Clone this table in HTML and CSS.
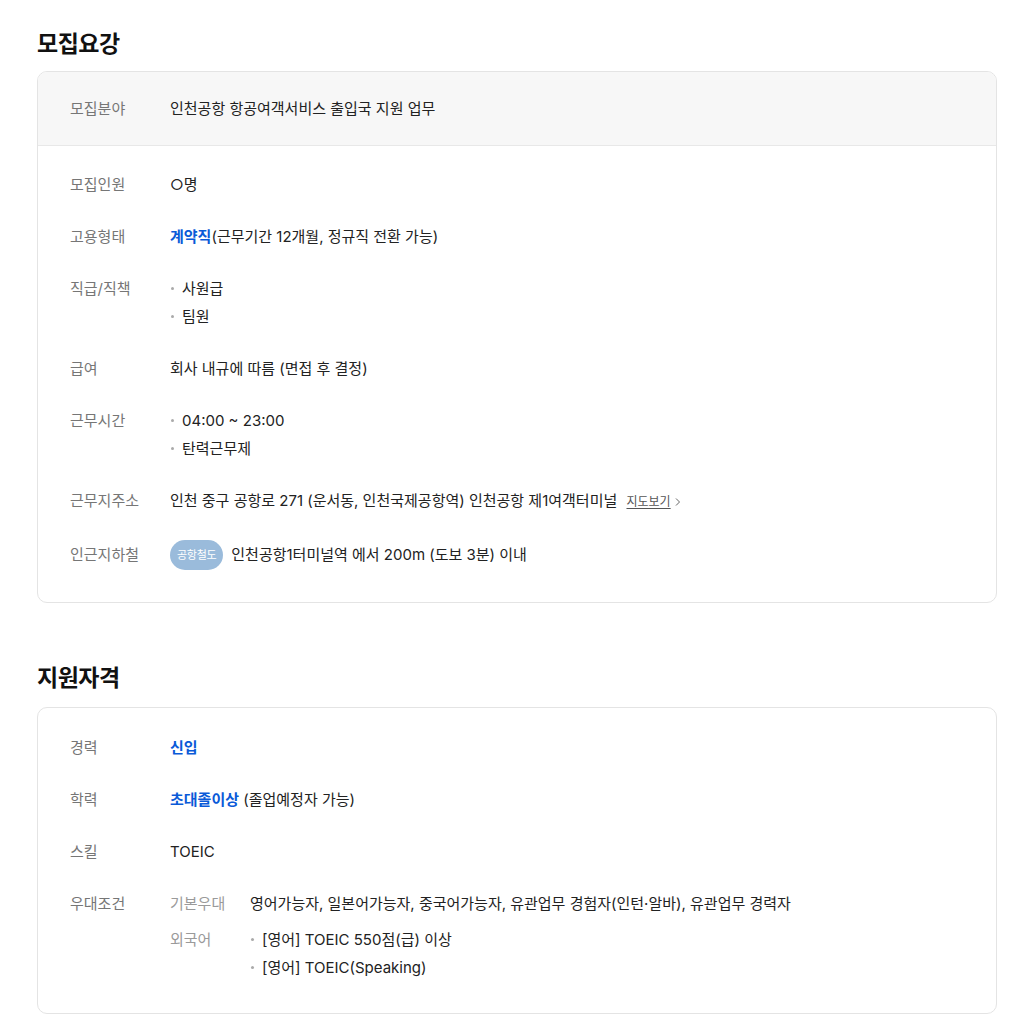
FILE: index.html
```html
<!DOCTYPE html>
<html lang="ko">
<head>
<meta charset="utf-8">
<title>모집요강</title>
<link rel="stylesheet" href="styles.css">
</head>
<body>
<div class="page">
  <section class="section">
    <h2 class="title">모집요강</h2>
    <div class="card">
      <div class="card-head">
        <div class="row">
          <div class="label">모집분야</div>
          <div class="value">인천공항 항공여객서비스 출입국 지원 업무</div>
        </div>
      </div>
      <div class="card-body">
        <div class="row">
          <div class="label">모집인원</div>
          <div class="value">○명</div>
        </div>
        <div class="row">
          <div class="label">고용형태</div>
          <div class="value"><strong class="em">계약직</strong>(근무기간 12개월, 정규직 전환 가능)</div>
        </div>
        <div class="row">
          <div class="label">직급/직책</div>
          <ul class="value bullets">
            <li>사원급</li>
            <li>팀원</li>
          </ul>
        </div>
        <div class="row">
          <div class="label">급여</div>
          <div class="value">회사 내규에 따름 (면접 후 결정)</div>
        </div>
        <div class="row">
          <div class="label">근무시간</div>
          <ul class="value bullets">
            <li>04:00 ~ 23:00</li>
            <li>탄력근무제</li>
          </ul>
        </div>
        <div class="row">
          <div class="label">근무지주소</div>
          <div class="value">인천 중구 공항로 271 (운서동, 인천국제공항역) 인천공항 제1여객터미널 <a class="map" href="#">지도보기</a><svg class="chev" width="6" height="10" viewBox="0 0 6 10"><path d="M1 1.5l3.5 3.5L1 8.5" fill="none" stroke="#666" stroke-width="1"/></svg></div>
        </div>
        <div class="row row-subway">
          <div class="label">인근지하철</div>
          <div class="value subway"><span class="badge">공항철도</span>인천공항1터미널역 에서 200m (도보 3분) 이내</div>
        </div>
      </div>
    </div>
  </section>

  <section class="section">
    <h2 class="title">지원자격</h2>
    <div class="card">
      <div class="card-body card-body2">
        <div class="row">
          <div class="label">경력</div>
          <div class="value"><strong class="em">신입</strong></div>
        </div>
        <div class="row">
          <div class="label">학력</div>
          <div class="value"><strong class="em">초대졸이상</strong> (졸업예정자 가능)</div>
        </div>
        <div class="row">
          <div class="label">스킬</div>
          <div class="value">TOEIC</div>
        </div>
        <div class="row">
          <div class="label">우대조건</div>
          <div class="value subs">
            <div class="sub">
              <div class="sublabel">기본우대</div>
              <div class="subvalue">영어가능자, 일본어가능자, 중국어가능자, 유관업무 경험자(인턴·알바), 유관업무 경력자</div>
            </div>
            <div class="sub">
              <div class="sublabel">외국어</div>
              <ul class="subvalue bullets">
                <li>[영어] TOEIC 550점(급) 이상</li>
                <li>[영어] TOEIC(Speaking)</li>
              </ul>
            </div>
          </div>
        </div>
      </div>
    </div>
  </section>
</div>
</body>
</html>
```

FILE: styles.css
```css
* { box-sizing: border-box; }
html, body { margin: 0; padding: 0; background: #fff; }
body {
  font-family: "Inter", "Noto Sans CJK KR", sans-serif;
  color: #222;
  font-size: 15px;
}
.page {
  width: 960px;
  margin-left: 37px;
  padding-top: 29px;
}
.section + .section { margin-top: 60px; }
.title {
  margin: 0 0 12px;
  font-size: 23px;
  line-height: 30px;
  font-weight: 700;
  color: #111;
  letter-spacing: -0.5px;
}
.section + .section .title { margin-bottom: 14px; }
.card {
  border: 1px solid #e4e4e4;
  border-radius: 10px;
  overflow: hidden;
}
.card-head {
  background: #f7f7f7;
  border-bottom: 1px solid #e8e8e8;
  padding: 23px 32px 22px;
}
.card-body {
  padding: 25px 32px 32px;
  display: flex;
  flex-direction: column;
  gap: 24px;
}
.card-body2 { padding-top: 26px; padding-bottom: 31px; }
.row {
  display: flex;
  line-height: 28px;
}
.label {
  width: 100px;
  flex: none;
  color: #767676;
}
.value {
  flex: 1;
  margin: 0;
  padding: 0;
}
.em {
  color: #0a5ad8;
  font-weight: 700;
}
.bullets { list-style: none; }
.bullets li {
  position: relative;
  padding-left: 12px;
}
.bullets li::before {
  content: "";
  position: absolute;
  left: 1px;
  top: 12px;
  width: 3px;
  height: 3px;
  border-radius: 50%;
  background: #aaa;
}
.map {
  color: #555;
  font-size: 12px;
  text-decoration: underline;
  text-underline-offset: 2px;
  margin-left: 5px;
}
.chev { margin-left: 4px; vertical-align: -1px; }
.row-subway { align-items: center; }
.subway { display: flex; align-items: center; }
.badge {
  display: inline-flex;
  align-items: center;
  justify-content: center;
  height: 30px;
  padding: 0 7px;
  margin-right: 8px;
  border-radius: 15px;
  background: #9abbdb;
  color: #fff;
  font-size: 11px;
  letter-spacing: -0.3px;
}
.subs {
  display: flex;
  flex-direction: column;
  gap: 8px;
}
.sub { display: flex; }
.sublabel {
  width: 80px;
  flex: none;
  color: #9a9a9a;
}
.subvalue { flex: 1; margin: 0; padding: 0; }
```
